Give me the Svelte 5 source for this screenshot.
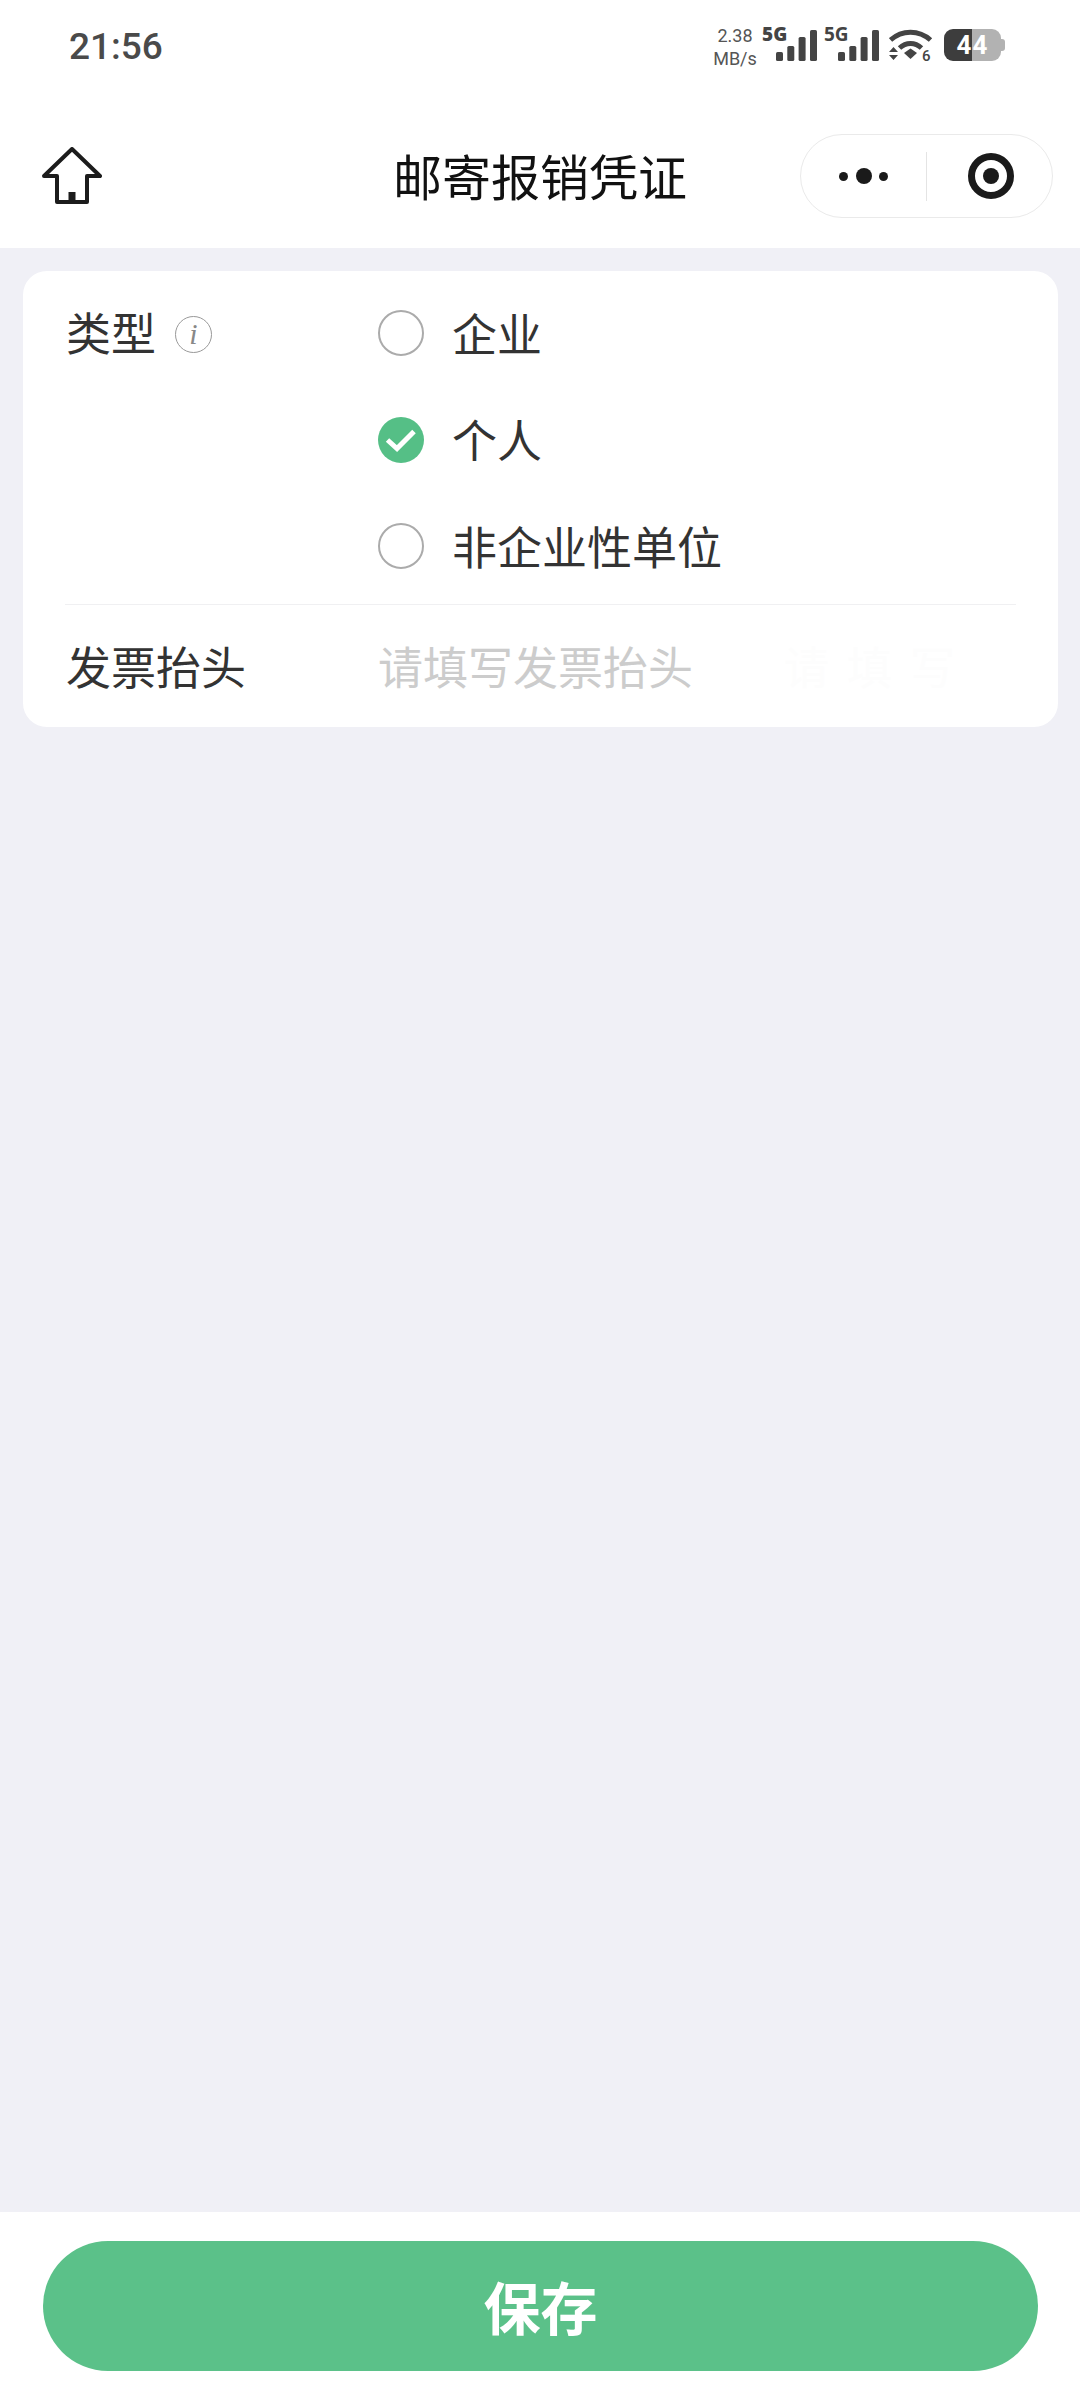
<script>
	const options = [
		{ label: '企业', checked: false },
		{ label: '个人', checked: true },
		{ label: '非企业性单位', checked: false }
	];
	const bars = [
		{ x: 0, y: 22, h: 9 },
		{ x: 11.3, y: 16, h: 15 },
		{ x: 22.6, y: 7, h: 24 },
		{ x: 34, y: 0, h: 31 }
	];
</script>

<div class="page">
	<header>
		<div class="status">
			<span class="time">21:56</span>
			<div class="indicators">
				<div class="speed"><span>2.38</span><span>MB/s</span></div>
				<div class="signal">
					<b>5G</b>
					<svg width="42" height="31" viewBox="0 0 42 31">
						{#each bars as bar}<rect x={bar.x} y={bar.y} width="7" height={bar.h} rx="1.6" />{/each}
					</svg>
				</div>
				<div class="signal second">
					<b>5G</b>
					<svg width="42" height="31" viewBox="0 0 42 31">
						{#each bars as bar}<rect x={bar.x} y={bar.y} width="7" height={bar.h} rx="1.6" />{/each}
					</svg>
				</div>
				<div class="wifi">
					<svg width="44" height="32" viewBox="0 0 44 32">
						<path d="M1.5 11 C13 0.5 30 0.5 41.5 11" fill="none" stroke="#444" stroke-width="5" />
						<path d="M10.5 19 C17 13 26 13 32.5 19" fill="none" stroke="#444" stroke-width="5" />
						<path d="M15 24 L21.5 19.5 L28 24 L21.5 30 Z" fill="#444" />
						<path d="M0 23 L4.5 18 L9 23 Z M0 26 L9 26 L4.5 31 Z" fill="#444" />
					</svg>
					<span>6</span>
				</div>
				<div class="battery"><div class="cell"><span>44</span></div><i></i></div>
			</div>
		</div>
		<nav>
			<svg class="home" width="60" height="58" viewBox="0 0 60 58">
				<path
					d="M30 2 L58 29 L45 29 L45 55 L15 55 L15 29 L2 29 Z"
					fill="none"
					stroke="#1c1c1c"
					stroke-width="4"
					stroke-linejoin="round"
				/>
				<rect x="26.5" y="45" width="7" height="10" fill="#1c1c1c" />
			</svg>
			<h1>邮寄报销凭证</h1>
			<div class="capsule">
				<div class="more"><i></i><i class="big"></i><i></i></div>
				<div class="target"><i></i></div>
			</div>
		</nav>
	</header>

	<main>
		<section class="card">
			<div class="row type">
				<div class="label">
					<span class="text">类型</span>
					<span class="info">i</span>
				</div>
				<div class="options">
					{#each options as option}
						<label class="option">
							{#if option.checked}
								<svg class="radio" width="46" height="46" viewBox="0 0 46 46">
									<circle cx="23" cy="23" r="23" fill="#55bf86" />
									<path
										d="M9.5 23 L19 31.5 L36 14.5"
										fill="none"
										stroke="#fff"
										stroke-width="5"
									/>
								</svg>
							{:else}
								<span class="radio empty"></span>
							{/if}
							<span class="text">{option.label}</span>
						</label>
					{/each}
				</div>
			</div>
			<div class="row title">
				<div class="label">发票抬头</div>
				<div class="value">
					<span class="placeholder">请填写发票抬头</span>
					<span class="ghost">请填写</span>
				</div>
			</div>
		</section>
	</main>

	<footer>
		<button>保存</button>
	</footer>
</div>

<style>
	:global(*) {
		box-sizing: border-box;
	}
	:global(body) {
		margin: 0;
		background: #f0f0f6;
		font-family: 'Noto Sans CJK SC', 'Noto Sans', sans-serif;
	}
	.page {
		height: 2400px;
		display: flex;
		flex-direction: column;
		background: #f0f0f6;
	}
	header {
		height: 248px;
		background: #fff;
	}
	.status {
		height: 134px;
		padding: 24px 0 0 69px;
		display: flex;
		justify-content: space-between;
		align-items: flex-start;
	}
	.time {
		font-family: Roboto, sans-serif;
		font-size: 37px;
		font-weight: 500;
		line-height: 46px;
		color: #4a4a4a;
	}
	.indicators {
		display: flex;
		align-items: flex-start;
		padding-right: 75px;
		color: #444;
	}
	.speed {
		width: 42px;
		margin-right: 6px;
		display: flex;
		flex-direction: column;
		align-items: center;
		font-family: Roboto, sans-serif;
		font-size: 18px;
		line-height: 23px;
		color: #555;
		white-space: nowrap;
	}
	.signal {
		width: 62px;
		height: 40px;
		position: relative;
	}
	.signal b {
		position: absolute;
		left: 0;
		top: -2px;
		font-family: 'Open Sans', sans-serif;
		font-size: 19px;
		line-height: 24px;
		font-weight: 800;
	}
	.signal.second b {
		font-weight: 700;
	}
	.signal svg {
		position: absolute;
		left: 14px;
		top: 6px;
		fill: #444;
	}
	.wifi {
		width: 58px;
		height: 40px;
		position: relative;
	}
	.wifi svg {
		position: absolute;
		left: 3px;
		top: 5px;
	}
	.wifi span {
		position: absolute;
		left: 36px;
		top: 24px;
		font-family: Roboto, sans-serif;
		font-weight: 500;
		font-size: 15px;
		line-height: 16px;
	}
	.battery {
		display: flex;
		align-items: center;
		margin-top: 5px;
	}
	.cell {
		width: 57px;
		height: 32px;
		border-radius: 9px;
		background: linear-gradient(to right, #3d3d3d 49%, #b2b2b2 49%);
		text-align: center;
	}
	.cell span {
		font-family: Roboto, sans-serif;
		font-weight: 700;
		font-size: 26px;
		line-height: 32px;
		color: #fff;
		letter-spacing: 1px;
	}
	.battery i {
		width: 4px;
		height: 12px;
		border-radius: 0 3px 3px 0;
		background: #b2b2b2;
	}
	nav {
		height: 114px;
		position: relative;
		display: flex;
		align-items: flex-start;
		justify-content: space-between;
		padding: 0 27px 0 42px;
	}
	.home {
		margin-top: 13px;
	}
	h1 {
		position: absolute;
		left: 0;
		right: 0;
		top: 6px;
		margin: 0;
		text-align: center;
		font-size: 49px;
		line-height: 70px;
		font-weight: 400;
		color: #111;
	}
	.capsule {
		width: 253px;
		height: 84px;
		border: 1.5px solid #eaeaea;
		border-radius: 42px;
		display: flex;
		align-items: center;
		position: relative;
		z-index: 1;
	}
	.more {
		width: 126px;
		height: 49px;
		border-right: 1.5px solid #e4e4e4;
		display: flex;
		align-items: center;
		justify-content: center;
		gap: 7.5px;
	}
	.more i {
		width: 9px;
		height: 9px;
		border-radius: 50%;
		background: #1a1a1a;
	}
	.more i.big {
		width: 16px;
		height: 16px;
	}
	.target {
		width: 46px;
		height: 46px;
		margin-left: 41px;
		border: 7px solid #1a1a1a;
		border-radius: 50%;
		display: flex;
		align-items: center;
		justify-content: center;
	}
	.target i {
		width: 16px;
		height: 16px;
		border-radius: 50%;
		background: #1a1a1a;
	}
	main {
		flex: 1;
		padding: 23px 22px 0 23px;
	}
	.card {
		background: #fff;
		border-radius: 24px;
		padding: 9px 42px 0;
		height: 456px;
	}
	.row {
		display: grid;
		grid-template-columns: 313px 1fr;
	}
	.type {
		height: 325px;
		border-bottom: 1.5px solid #f0f0f2;
	}
	.label {
		font-size: 45px;
		color: #333;
		padding-left: 1px;
		display: flex;
		align-items: center;
		height: 106px;
	}
	.info {
		width: 37px;
		height: 37px;
		margin: 2px 0 0 19px;
		border: 1.5px solid #999;
		border-radius: 50%;
		font-family: 'Liberation Serif', serif;
		font-style: italic;
		font-size: 30px;
		line-height: 33px;
		text-align: center;
		color: #888;
	}
	.option {
		height: 106.5px;
		display: flex;
		align-items: center;
		gap: 28px;
		font-size: 45px;
		color: #333;
	}
	.text {
		padding-bottom: 2px;
	}
	.label .text {
		padding-bottom: 4px;
	}
	.radio {
		display: block;
		flex: none;
	}
	.radio.empty {
		width: 46px;
		height: 46px;
		border: 2px solid #ababab;
		border-radius: 50%;
	}
	.title .label {
		height: 121px;
	}
	.value {
		display: flex;
		align-items: center;
		height: 121px;
		font-size: 45px;
	}
	.placeholder {
		width: 406px;
		color: #ccc;
		white-space: nowrap;
	}
	.ghost {
		color: #fdfdfd;
		letter-spacing: 18px;
		white-space: nowrap;
	}
	footer {
		height: 188px;
		background: #fff;
		padding: 29px 42px 0 43px;
	}
	button {
		display: block;
		width: 100%;
		height: 130px;
		border: 0;
		border-radius: 65px;
		padding: 0 0 3px;
		background: #5bc189;
		color: #fff;
		font: inherit;
		font-size: 57px;
		font-weight: 700;
	}
</style>
